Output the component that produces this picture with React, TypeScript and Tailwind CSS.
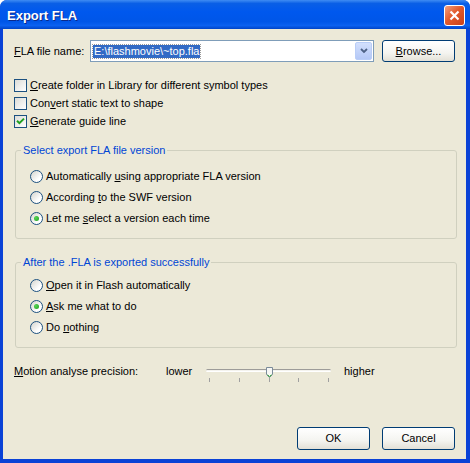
import React from "react";

function U({ children }: { children: React.ReactNode }) {
  return <span className="underline underline-offset-[1px]">{children}</span>;
}

function CheckBox({ checked }: { checked?: boolean }) {
  return (
    <span className="w-[13px] h-[13px] shrink-0 border border-[#1c5180] bg-[linear-gradient(135deg,#dcdcd7,#ffffff)] flex items-center justify-center">
      {checked && (
        <svg width="9" height="9" viewBox="0 0 9 9">
          <path d="M1 3.8 L3.4 6.2 L8 1.6" stroke="#21a121" strokeWidth="2" fill="none" />
        </svg>
      )}
    </span>
  );
}

function Radio({ on }: { on?: boolean }) {
  return (
    <span className="w-[13px] h-[13px] shrink-0 rounded-full border border-[#1c5180] bg-[linear-gradient(135deg,#d4d4cd,#ffffff_70%)] flex items-center justify-center">
      {on && <span className="w-[5px] h-[5px] rounded-full bg-[radial-gradient(circle_at_35%_35%,#55d455,#21a121)]" />}
    </span>
  );
}

function XpButton({ children, className = "" }: { children: React.ReactNode; className?: string }) {
  return (
    <button
      className={`h-[22px] w-[73px] rounded-[3px] border border-[#003c74] bg-[linear-gradient(#ffffff,#f4f4f0_60%,#e3e0d6)] text-black flex items-center justify-center ${className}`}
    >
      {children}
    </button>
  );
}

export default function App() {
  return (
    <div className="w-[470px] h-[463px] bg-white font-['Liberation_Sans',Arial,sans-serif] text-[11px] text-black">
      <div className="w-full h-full flex flex-col rounded-t-[7px] overflow-hidden bg-[#0a42d6]">
        {/* Title bar */}
        <div className="h-[29px] shrink-0 flex items-center justify-between bg-[linear-gradient(#3f8cf3_0%,#0a5fe6_12%,#0058ee_40%,#0056e8_75%,#0b61f0_88%,#0044c8_100%)]">
          <span className="pl-[7px] pt-[3px] text-white font-bold text-[13px] [text-shadow:1px_1px_#0c2a8a]">Export FLA</span>
          <span className="mr-[5px] mt-[2px] w-[21px] h-[21px] rounded-[3px] border border-white bg-[linear-gradient(135deg,#f0a080,#e25a2c_45%,#c8401a)] flex items-center justify-center">
            <svg width="11" height="11" viewBox="0 0 11 11">
              <path d="M1.5 1.5 L9.5 9.5 M9.5 1.5 L1.5 9.5" stroke="white" strokeWidth="2.2" />
            </svg>
          </span>
        </div>

        {/* Body */}
        <div className="flex-1 ml-[3px] mr-[4px] mb-[4px] bg-[#ece9d8] flex flex-col px-[11px]">
          <div className="mt-[11px] flex items-center">
            <span className="w-[76px]">
              <U>F</U>LA file name:
            </span>
            <div className="w-[284px] h-[22px] border border-[#7f9db9] bg-white flex items-center pl-[2px]">
              <span className="bg-[#316ac5] text-white leading-[13px] px-[1px] outline-1 outline-dotted outline-[#9a9a9a]">
                E:\flashmovie\~top.fla
              </span>
              <span className="ml-auto mr-[1px] w-[17px] h-[18px] rounded-[2px] border border-[#b9cdf7] bg-[linear-gradient(#d3e0fd,#b4c8f6)] flex items-center justify-center">
                <svg width="8" height="6" viewBox="0 0 8 6">
                  <path d="M1 1 L4 4 L7 1" stroke="#4d6185" strokeWidth="1.8" fill="none" />
                </svg>
              </span>
            </div>
            <XpButton className="ml-[8px]">
              <span>
                <U>B</U>rowse...
              </span>
            </XpButton>
          </div>

          <div className="mt-[14px] flex flex-col">
            <label className="h-[18px] flex items-center gap-[3px]">
              <CheckBox />
              <span>
                <U>C</U>reate folder in Library for different symbol types
              </span>
            </label>
            <label className="h-[18px] flex items-center gap-[3px]">
              <CheckBox />
              <span>
                Con<U>v</U>ert static text to shape
              </span>
            </label>
            <label className="h-[18px] flex items-center gap-[3px]">
              <CheckBox checked />
              <span>
                <U>G</U>enerate guide line
              </span>
            </label>
          </div>

          <fieldset className="mt-[14px] ml-[1px] w-[442px] border border-[#d0d0bf] rounded-[3px] pl-[14px] pt-[9px] pb-[9px]">
            <legend className="ml-[-9px] px-[2px] leading-[13px] text-[#0046d5]">Select export FLA file version</legend>
            <label className="h-[21px] flex items-center gap-[3px]">
              <Radio />
              <span>
                Automatically <U>u</U>sing appropriate FLA version
              </span>
            </label>
            <label className="h-[21px] flex items-center gap-[3px]">
              <Radio />
              <span>
                According <U>t</U>o the SWF version
              </span>
            </label>
            <label className="h-[21px] flex items-center gap-[3px]">
              <Radio on />
              <span>
                Let me <U>s</U>elect a version each time
              </span>
            </label>
          </fieldset>

          <fieldset className="mt-[17px] ml-[1px] w-[442px] border border-[#d0d0bf] rounded-[3px] pl-[14px] pt-[6px] pb-[9px]">
            <legend className="ml-[-9px] px-[2px] leading-[13px] text-[#0046d5]">After the .FLA is exported successfully</legend>
            <label className="h-[21px] flex items-center gap-[3px]">
              <Radio />
              <span>
                <U>O</U>pen it in Flash automatically
              </span>
            </label>
            <label className="h-[21px] flex items-center gap-[3px]">
              <Radio on />
              <span>
                <U>A</U>sk me what to do
              </span>
            </label>
            <label className="h-[21px] flex items-center gap-[3px]">
              <Radio />
              <span>
                Do <U>n</U>othing
              </span>
            </label>
          </fieldset>

          <div className="mt-[14px] h-[18px] flex items-center">
            <span className="w-[152px]">
              <U>M</U>otion analyse precision:
            </span>
            <span className="w-[40px]">lower</span>
            <div className="relative w-[125px] h-[18px]">
              <div className="absolute left-0 right-0 top-[7px] h-[3px] rounded-[2px] border-t border-[#9d9c99] border-b border-b-white bg-[#f4f3ee]" />
              {[3, 33, 63, 92, 122].map((x) => (
                <span key={x} className="absolute top-[16px] w-[1px] h-[4px] bg-[#a0a0a0]" style={{ left: x }} />
              ))}
              <svg className="absolute left-[60px] top-[5px]" width="7" height="11" viewBox="0 0 7 11">
                <path d="M0.5 0.5 H6.5 V7.5 L3.5 10.5 L0.5 7.5 Z" fill="#f7f7f4" stroke="#7a8a99" />
                <path d="M1.5 7.8 L3.5 9.6 L5.5 7.8" stroke="#21a121" fill="none" />
              </svg>
            </div>
            <span className="ml-[13px]">higher</span>
          </div>

          <div className="mt-auto mb-[9px] flex justify-end gap-[12px]">
            <XpButton className="h-[23px]">OK</XpButton>
            <XpButton className="h-[23px]">Cancel</XpButton>
          </div>
        </div>
      </div>
    </div>
  );
}
